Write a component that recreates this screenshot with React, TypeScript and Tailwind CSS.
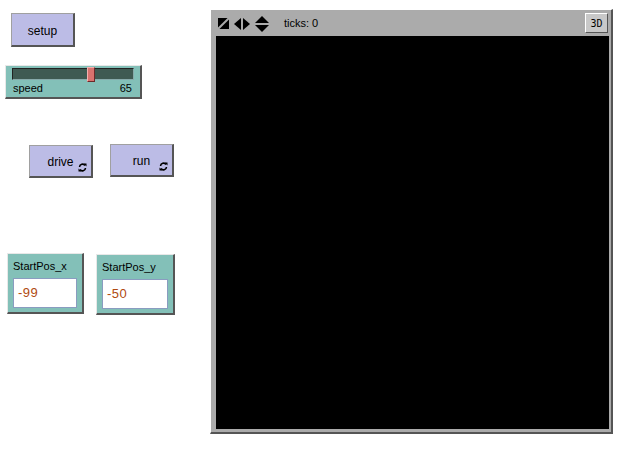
import React from "react";

const font = { fontFamily: '"Liberation Sans", Arial, sans-serif' };

function Forever() {
  return (
    <svg width="9" height="9" viewBox="0 0 9 9" className="absolute right-[4px] bottom-[4px]">
      <path d="M1.5 4 A3 3 0 0 1 7 2.5" stroke="black" strokeWidth="1.6" fill="none" />
      <path d="M7.5 5 A3 3 0 0 1 2 6.5" stroke="black" strokeWidth="1.6" fill="none" />
      <path d="M5.5 0.5 L8.5 0.5 L8.5 3.5 Z" fill="black" />
      <path d="M3.5 8.5 L0.5 8.5 L0.5 5.5 Z" fill="black" />
    </svg>
  );
}

function Btn({ x, y, w, h, label, forever }: { x: number; y: number; w: number; h: number; label: string; forever?: boolean }) {
  return (
    <div
      className="absolute bg-[#bcbce6] border border-t-[#a0a0a0] border-l-[#a0a0a0] border-r-[#555] border-b-[#555] border-r-2 border-b-2 flex items-center justify-center text-[12px] text-black"
      style={{ left: x, top: y, width: w, height: h }}
    >
      <span className="mt-[2px]">{label}</span>
      {forever && <Forever />}
    </div>
  );
}

function InputBox({ x, y, w, label, value }: { x: number; y: number; w: number; label: string; value: string }) {
  return (
    <div
      className="absolute bg-[#83c0b8] border border-t-[#e8e8e8] border-l-[#e8e8e8] border-r-2 border-b-2 border-r-[#555] border-b-[#555] flex flex-col px-[5px] pt-[6px]"
      style={{ left: x, top: y, width: w, height: 61 }}
    >
      <div className="text-[11px] leading-[13px] text-black">{label}</div>
      <div className="mt-[5px] h-[30px] bg-white border border-[#8a9cc0] flex items-center pl-[4px] text-[13px] text-[#b04a10] tracking-[0.5px]">
        {value}
      </div>
    </div>
  );
}

export default function App() {
  return (
    <div className="relative w-[621px] h-[459px] bg-white overflow-hidden" style={font}>
      <Btn x={11} y={13} w={64} h={34} label="setup" />

      {/* slider */}
      <div className="absolute left-[5px] top-[65px] w-[137px] h-[34px] bg-[#83c0b8] border border-t-[#e8e8e8] border-l-[#e8e8e8] border-r-2 border-b-2 border-r-[#555] border-b-[#555] flex flex-col px-[6px] pt-[2px]">
        <div className="relative h-[12px] w-[122px] bg-[#3f5a52] border border-t-[#222] border-l-[#222] border-b-[#8aa] border-r-[#8aa]">
          <div className="absolute left-[74px] -top-[2px] w-[8px] h-[15px] bg-[#d9726e] border border-t-[#f3b0b0] border-l-[#f3b0b0] border-r-[#6b2a2a] border-b-[#6b2a2a]" />
        </div>
        <div className="flex justify-between pl-[1px] pr-[2px] mt-[2px] text-[11px] leading-[13px] text-black">
          <span>speed</span>
          <span>65</span>
        </div>
      </div>

      <Btn x={29} y={145} w={64} h={33} label="drive" forever />
      <Btn x={110} y={144} w={64} h={33} label="run" forever />

      <InputBox x={7} y={253} w={77} label="StartPos_x" value="-99" />
      <InputBox x={96} y={254} w={79} label="StartPos_y" value="-50" />

      {/* view */}
      <div className="absolute left-[210px] top-[9px] w-[403px] h-[425px] bg-[#ababab] border border-t-[#ffffff] border-l-[#ffffff] border-r-2 border-b-2 border-r-[#555] border-b-[#555] flex flex-col pl-[5px] pr-[2px] pb-[3px]">
        <div className="h-[26px] flex items-center shrink-0 pr-[1px]">
          <svg width="11" height="11" viewBox="0 0 11 11" className="ml-[2px] mt-[1px]">
            <rect x="0" y="0" width="11" height="11" fill="black" />
            <path d="M0 11 L11 0" stroke="#ababab" strokeWidth="2" />
            <path d="M3 11 L11 3 L11 11 Z" fill="black" />
          </svg>
          <svg width="16" height="12" viewBox="0 0 16 12" className="ml-[5px] mt-[1px]">
            <path d="M0 6 L7 0 L7 12 Z" fill="black" />
            <path d="M16 6 L9 0 L9 12 Z" fill="black" />
          </svg>
          <svg width="14" height="16" viewBox="0 0 14 16" className="ml-[5px] mt-[1px]">
            <path d="M7 0 L14 7 L0 7 Z" fill="black" />
            <path d="M7 16 L14 9 L0 9 Z" fill="black" />
          </svg>
          <span className="ml-[15px] text-[11px] text-black">ticks: 0</span>
          <div className="ml-auto w-[23px] h-[20px] bg-[#c8c8c8] border border-t-white border-l-white border-r-[#555] border-b-[#555] flex items-center justify-center text-[10px] text-black" style={{ fontFamily: '"DejaVu Sans Mono", monospace' }}>
            3D
          </div>
        </div>
        <div className="flex-1 bg-black" />
      </div>
    </div>
  );
}
